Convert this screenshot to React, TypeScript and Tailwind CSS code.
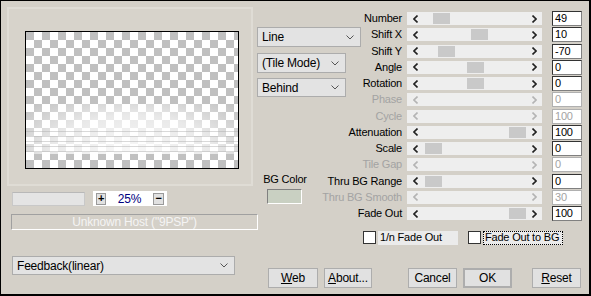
import React from 'react';

type Row = { label: string; value: string; pos?: number; disabled?: boolean };

const rows: Row[] = [
  { label: 'Number', value: '49', pos: 26 },
  { label: 'Shift X', value: '10', pos: 64 },
  { label: 'Shift Y', value: '-70', pos: 31 },
  { label: 'Angle', value: '0', pos: 60 },
  { label: 'Rotation', value: '0', pos: 60 },
  { label: 'Phase', value: '0', disabled: true },
  { label: 'Cycle', value: '100', disabled: true },
  { label: 'Attenuation', value: '100', pos: 102 },
  { label: 'Scale', value: '0', pos: 18 },
  { label: 'Tile Gap', value: '0', disabled: true },
  { label: 'Thru BG Range', value: '0', pos: 18 },
  { label: 'Thru BG Smooth', value: '30', disabled: true },
  { label: 'Fade Out', value: '100', pos: 102 },
];

const Chevron = () => (
  <svg width="8" height="5" viewBox="0 0 8 5">
    <polyline points="0.5,0.5 4,4 7.5,0.5" fill="none" stroke="#555" strokeWidth="1" />
  </svg>
);

const Arrow = ({ dir, disabled }: { dir: 'l' | 'r'; disabled?: boolean }) => (
  <svg width="5" height="8" viewBox="0 0 5 8">
    <polyline
      points={dir === 'l' ? '4.5,0.5 1,4 4.5,7.5' : '0.5,0.5 4,4 0.5,7.5'}
      fill="none"
      stroke={disabled ? '#b4b4b4' : '#222'}
      strokeWidth="1.6"
    />
  </svg>
);

const Select = ({ label, className }: { label: string; className: string }) => (
  <div className={`flex items-center justify-between whitespace-nowrap border border-[#acacac] bg-[#e3e3e3] pl-[4px] pr-[6px] ${className}`}>
    <span>{label}</span>
    <Chevron />
  </div>
);

const Button = ({ children, className = '' }: { children: React.ReactNode; className?: string }) => (
  <div className={`flex h-[20px] items-center justify-center border border-[#adadad] bg-[#e1e1e1] ${className}`}>
    {children}
  </div>
);

const SliderRow = ({ row }: { row: Row }) => (
  <div className="flex h-[16.25px] items-center">
    <div className={`flex w-[79px] justify-end whitespace-nowrap ${row.disabled ? 'text-[#a3a3a3]' : 'text-black'}`}>
      {row.label}
    </div>
    <div className="relative ml-[5px] flex h-[13px] w-[135px] items-center justify-between bg-[#eeeeee] pl-[6px] pr-[5px]">
      <Arrow dir="l" disabled={row.disabled} />
      {row.pos !== undefined && (
        <div className="absolute top-[1px] h-[11px] w-[17px] bg-[#c9c9c9]" style={{ left: row.pos }} />
      )}
      <Arrow dir="r" disabled={row.disabled} />
    </div>
    <div
      className={`ml-[10px] flex h-[15px] w-[30px] items-center border bg-white pl-[2px] leading-none ${
        row.disabled
          ? 'border-[#b0b0b0] text-[#a3a3a3]'
          : 'border-[#808080] border-t-[#333] border-l-[#333] text-black'
      }`}
    >
      {row.value}
    </div>
  </div>
);

const App = () => {
  return (
    <div className="flex h-[296px] w-[591px] border-t border-l border-r-2 border-b-2 border-black bg-[#d4d0c8] font-['Liberation_Sans',Arial,sans-serif] text-[11px] leading-none tracking-[-0.2px] text-black">
      {/* left column */}
      <div className="flex w-[256px] flex-col pl-[6px] pt-[6px]">
        <div className="h-[179px] w-[246px] border-2 border-[#dfdcd5] bg-[#d7d3cb] pl-[16px] pt-[22px]">
          <div className="relative h-[138px] w-[214px] overflow-hidden border border-black bg-[conic-gradient(#fff_25%,#c0c0c0_0_50%,#fff_0_75%,#c0c0c0_0)] bg-[length:16px_16px]">
            <div className="absolute left-0 right-0 top-[72px] h-[50px] bg-[radial-gradient(ellipse_at_50%_100%,rgba(255,255,255,0.9)_0%,rgba(255,255,255,0.65)_55%,rgba(255,255,255,0)_100%)]" />
            <div className="absolute left-0 right-0 top-[95px] h-[27px] bg-[repeating-linear-gradient(to_bottom,rgba(255,255,255,0)_0px,rgba(255,255,255,0)_4px,rgba(170,170,170,0.45)_4px,rgba(170,170,170,0.45)_5px)]" />
          </div>
        </div>

        <div className="mt-[5px] flex items-center">
          <div className="ml-[5px] h-[14px] w-[73px] border border-[#c8c8c8] border-t-[#b8b8b8] bg-[#e4e4e4]" />
          <div className="ml-[8px] flex h-[15px] w-[74px] items-center bg-white px-[3px]">
            <div className="flex h-[12px] w-[10px] items-center justify-center border border-[#9a9a9a] bg-[#e1e1e1] font-bold">
              +
            </div>
            <div className="flex-1 text-center text-[12px] text-[#000080]">25%</div>
            <div className="flex h-[12px] w-[11px] items-center justify-center border border-[#9a9a9a] bg-[#e1e1e1] font-bold">
              −
            </div>
          </div>
        </div>

        <div className="ml-[4px] mt-[8px] flex h-[16px] w-[247px] items-center justify-center whitespace-nowrap border border-[#a0a0a0] border-b-white border-r-white text-[12px] text-[#f4f4f4]">
          Unknown Host ("9PSP")
        </div>

        <Select label="Feedback(linear)" className="ml-[5px] mt-[26px] h-[19px] w-[223px] text-[12px]" />
      </div>

      {/* right column */}
      <div className="flex flex-1 flex-col">
        <div className="flex">
          <div className="flex w-[66px] flex-col pt-[26px]">
            <Select label="Line" className="h-[20px] w-[104px] shrink-0 text-[12px]" />
            <Select label="(Tile Mode)" className="mt-[6px] h-[20px] w-[89px] shrink-0 text-[12px]" />
            <Select label="Behind" className="mt-[5px] h-[19px] w-[89px] shrink-0 text-[12px]" />
            <div className="ml-[6px] mt-[77px] w-[44px] whitespace-nowrap text-center">BG Color</div>
            <div className="ml-[10px] mt-[4px] h-[15px] w-[35px] border border-[#808080] border-b-white border-r-white bg-[#c9d0c2]" />
          </div>
          <div className="flex flex-col pt-[9.5px]">
            {rows.map((r) => (
              <SliderRow key={r.label} row={r} />
            ))}
          </div>
        </div>

        <div className="ml-[106px] mt-[9px] flex h-[14px] items-center whitespace-nowrap">
          <div className="h-[13px] w-[13px] border border-[#333] bg-white" />
          <div className="ml-[2px] flex h-[14px] w-[80px] items-center bg-[#ebebeb] pl-[2px]">1/n Fade Out</div>
          <div className="ml-[10px] h-[13px] w-[13px] border border-[#333] bg-white" />
          <div className="ml-[2px] flex h-[14px] w-[80px] items-center border border-dotted border-black bg-[#ebebeb] pl-[1px]">
            Fade Out to BG
          </div>
        </div>

        <div className="ml-[11px] mt-[23px] flex text-[12px]">
          <Button className="w-[50px]">
            <span className="underline">W</span>eb
          </Button>
          <Button className="ml-[6px] w-[48px]">
            <span className="underline">A</span>bout...
          </Button>
          <Button className="ml-[36px] w-[49px]">Cancel</Button>
          <Button className="ml-[6px] w-[49px] border-2 border-[#0078d7]">OK</Button>
          <Button className="ml-[20px] w-[49px]">
            <span className="underline">R</span>eset
          </Button>
        </div>
      </div>
    </div>
  );
};

export default App;
